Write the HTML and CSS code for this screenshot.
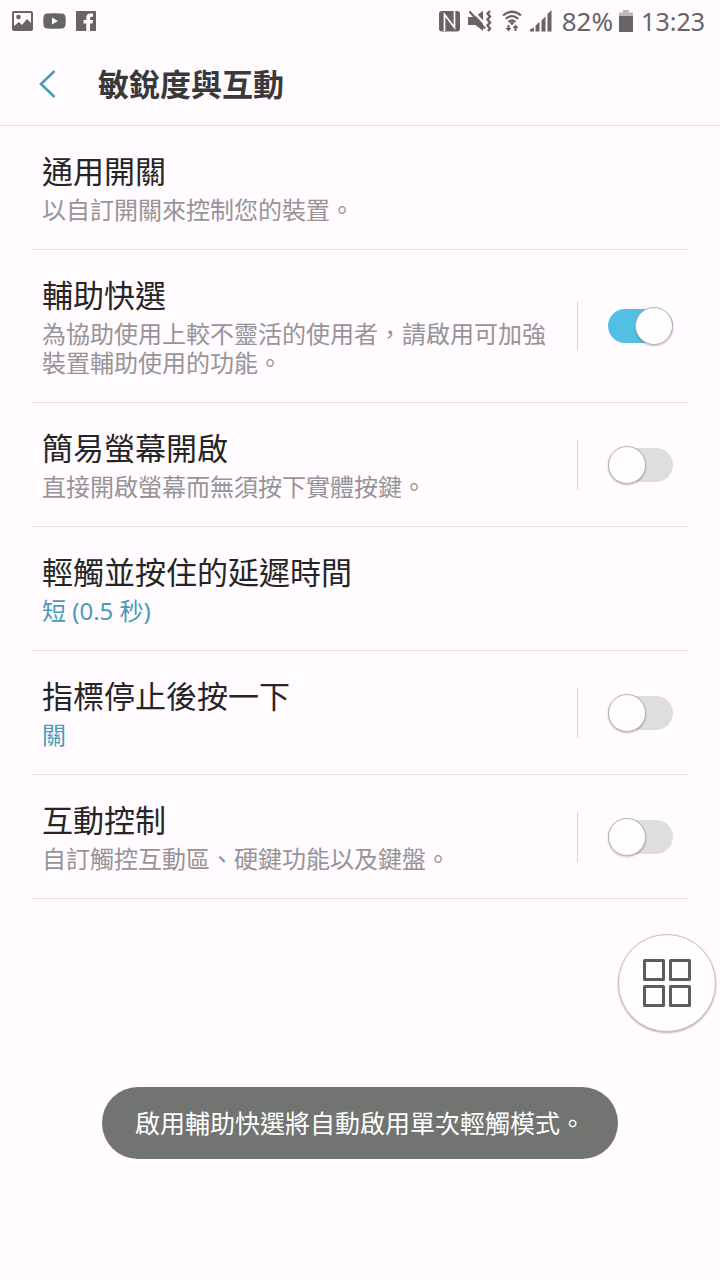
FILE: index.html
```html
<!DOCTYPE html>
<html lang="zh-Hant">
<head>
    <meta charset="UTF-8">
    <meta name="viewport" content="width=device-width, initial-scale=1.0">
    <title>敏銳度與互動</title>
    <link rel="stylesheet" href="styles.css">
</head>
<body>
    <div class="status-bar">
        <div class="status-group status-left">
            <svg width="21" height="20" viewBox="0 0 21 20">
                <path fill="currentColor" fill-rule="evenodd" d="M2 0H19a2 2 0 0 1 2 2V18a2 2 0 0 1-2 2H2a2 2 0 0 1-2-2V2a2 2 0 0 1 2-2ZM2 2V15L7 11L10 14L15 8L19 12V2Z"/>
                <circle cx="6.500" cy="6" r="2.300" fill="currentColor"/>
            </svg>
            <svg width="23" height="20" viewBox="0 0 23 20">
                <path fill="currentColor" fill-rule="evenodd" d="M4 2.500Q11.500 1.800 19 2.500Q22 2.800 22.500 6Q23 10 22.500 14Q22 17.200 19 17.500Q11.500 18.200 4 17.500Q1 17.200.5 14Q0 10 .5 6Q1 2.800 4 2.500ZM9 6.500V13.500L15 10Z"/>
            </svg>
            <svg width="20" height="20" viewBox="0 0 20 20">
                <path fill="currentColor" d="M0 0H20V20H14V12.500H16.500L17 9H14V7Q14 5.800 15.200 5.800H17V2.600H14.500Q10.300 2.600 10.300 6.700V9H7.500V12.500H10.300V20H0Z"/>
            </svg>
        </div>
        <div class="status-group status-right">
            <svg width="21" height="22" viewBox="0 0 21 22">
                <rect y="1" width="21" height="20.500" rx="3" fill="currentColor"/>
                <path fill="none" stroke="#fffbff" stroke-width="1.700" d="M5.500 21V4.500L15.500 17.500V1"/>
            </svg>
            <svg width="26" height="22" viewBox="0 0 26 22">
                <path fill="currentColor" d="M0 7H7L15 .8V21L7.500 15H0Z"/>
                <path fill="none" stroke="#fffbff" stroke-width="2.400" d="M3.500-.5L19 16.500"/>
                <path fill="none" stroke="currentColor" stroke-width="2.200" d="M1.500 1.500L17 18.500"/>
                <path fill="none" stroke="currentColor" stroke-width="2.400" d="M22 1L19.500 3.500L22 6.500L19.500 9.500L22 12.500L19.500 15.500L22 18.500L20 21"/>
            </svg>
            <svg width="20" height="22" viewBox="0 0 20 22">
                <g fill="none" stroke="currentColor" stroke-width="2.200">
                    <path d="M1 5.500Q10-2 19 5.500M3.800 8.800Q10 3.500 16.200 8.800M6.500 12Q10 9 13.500 12"/>
                    <path d="M6.500 15V20M13.500 21V16"/>
                </g>
                <path fill="currentColor" d="M7.800 13L10 11.500L12.200 13L10 15.500ZM3.500 18H9.500L6.500 21.500ZM10.500 18H16.500L13.500 14.500Z"/>
            </svg>
            <svg width="22" height="22" viewBox="0 0 22 22">
                <path fill="currentColor" d="M0 19.500L4 17.500V21.500H0ZM5.500 15.500L9.500 12V21.500H5.500ZM11.500 10.500L15.500 6.500V21.500H11.500ZM17.500 4L21.500 0V21.500H17.500Z"/>
            </svg>
            <span class="battery-level">82%</span>
            <svg class="battery" width="14" height="22" viewBox="0 0 14 22">
                <path fill="#bbb8bb" d="M4 0H10V2.500H14V7H0V2.500H4Z"/>
                <path fill="currentColor" d="M0 6H14V22H0Z"/>
            </svg>
            <span>13:23</span>
        </div>
    </div>

    <header class="header">
        <button class="back" type="button" aria-label="返回">
            <svg width="18" height="28" viewBox="0 0 18 28">
                <path d="M15.500 1L2 14L15.500 27" fill="none" stroke="currentColor" stroke-width="2.600"/>
            </svg>
        </button>
        <h1>敏銳度與互動</h1>
    </header>

    <main class="settings">
        <div class="item">
            <div class="item-text">
                <h2>通用開關</h2>
                <p>以自訂開關來控制您的裝置。</p>
            </div>
        </div>
        <div class="item">
            <label class="item-text" for="menu">
                <span class="title">輔助快選</span>
                <span class="summary">為協助使用上較不靈活的使用者，請啟用可加強裝置輔助使用的功能。</span>
            </label>
            <div class="switch-box"><input class="switch" type="checkbox" id="menu" checked></div>
        </div>
        <div class="item">
            <label class="item-text" for="screen">
                <span class="title">簡易螢幕開啟</span>
                <span class="summary">直接開啟螢幕而無須按下實體按鍵。</span>
            </label>
            <div class="switch-box"><input class="switch" type="checkbox" id="screen"></div>
        </div>
        <div class="item">
            <div class="item-text">
                <h2>輕觸並按住的延遲時間</h2>
                <p class="value">短 (0.5 秒)</p>
            </div>
        </div>
        <div class="item">
            <label class="item-text" for="pointer">
                <span class="title">指標停止後按一下</span>
                <span class="summary value">關</span>
            </label>
            <div class="switch-box"><input class="switch" type="checkbox" id="pointer"></div>
        </div>
        <div class="item">
            <label class="item-text" for="control">
                <span class="title">互動控制</span>
                <span class="summary">自訂觸控互動區、硬鍵功能以及鍵盤。</span>
            </label>
            <div class="switch-box"><input class="switch" type="checkbox" id="control"></div>
        </div>
    </main>

    <button class="floating" type="button" aria-label="輔助快選">
        <svg width="50" height="50" viewBox="0 0 50 50">
            <path fill="none" stroke="currentColor" stroke-width="3" stroke-linejoin="round" d="M2.500 2.500H21.500V21.500H2.500ZM28.500 2.500H47.500V21.500H28.500ZM2.500 28.500H21.500V47.500H2.500ZM28.500 28.500H47.500V47.500H28.500Z"/>
        </svg>
    </button>

    <div class="toast" role="status">啟用輔助快選將自動啟用單次輕觸模式。</div>
</body>
</html>
```

FILE: styles.css
```css
*, *::before {
    box-sizing: border-box;
}

body {
    margin: 0;
    min-height: 100vh;
    background-color: #fffbff;
    color: #252525;
    font-family: "Noto Sans", "Noto Sans CJK TC", sans-serif;
}

h1, h2, p {
    margin: 0;
}

svg {
    display: block;
}

button {
    border: none;
    padding: 0;
    cursor: pointer;
}

/* Barra de estado */
.status-bar {
    display: flex;
    justify-content: space-between;
    align-items: center;
    height: 42px;
    padding: 0 15px 0 12px;
    color: #666466;
    font-size: 25px;
    line-height: 42px;
}

.status-group {
    display: flex;
    align-items: center;
}

.status-left {
    gap: 10px;
}

.status-right {
    gap: 8px;
}

.battery-level {
    margin: 0 -2px 0 2px;
    font-size: 26px;
}

.header {
    display: flex;
    align-items: center;
    height: 84px;
    padding: 0 32px;
    border-bottom: 1px solid #e3e0e3;
}

.back {
    display: flex;
    align-items: center;
    justify-content: center;
    width: 32px;
    height: 48px;
    margin-right: 34px;
    background: none;
    color: #4a9bb9;
}

h1 {
    font-size: 31px;
    line-height: 44px;
    font-weight: bold;
    color: #3a393a;
}

/* Lista de ajustes */
.settings {
    margin: 0 32px;
}

.item {
    display: flex;
    align-items: center;
    border-bottom: 1px solid #e3e0e3;
}

.item-text {
    flex: 1;
    padding: 23px 24px 25px 10px;
}

h2, .title {
    display: block;
    margin-bottom: 2px;
    font-size: 31px;
    line-height: 44px;
    font-weight: normal;
}

p, .summary {
    display: block;
    font-size: 24px;
    line-height: 29px;
    color: #969496;
}

.value {
    color: #4a9bb9;
}

.switch-box {
    display: flex;
    align-items: center;
    height: 50px;
    padding: 0 15px 0 30px;
    border-left: 1px solid #d5d2d5;
}

.switch {
    appearance: none;
    display: flex;
    align-items: center;
    width: 65px;
    height: 34px;
    margin: 0;
    border-radius: 17px;
    background-color: #dededf;
    cursor: pointer;
}

.switch::before {
    content: "";
    flex: none;
    width: 38px;
    height: 38px;
    border: 1px solid #b5b3b5;
    border-radius: 50%;
    background-color: #fffdff;
    box-shadow: 0 1px 2px rgba(0, 0, 0, 0.25);
}

.switch:checked {
    justify-content: flex-end;
    background-color: #52c0e5;
}

/* Flotantes */
.floating {
    position: fixed;
    right: 4px;
    bottom: 248px;
    display: flex;
    align-items: center;
    justify-content: center;
    width: 98px;
    height: 98px;
    border: 1px solid #c3c1c3;
    border-radius: 50%;
    background-color: #fffdff;
    color: #5c5e5c;
    box-shadow: 0 1px 2px rgba(0, 0, 0, 0.3);
}

.toast {
    position: fixed;
    left: 50%;
    bottom: 121px;
    transform: translateX(-50%);
    padding: 0 33px;
    border-radius: 36px;
    background-color: #727471;
    color: #fff;
    font-size: 25px;
    line-height: 72px;
    white-space: nowrap;
}
```
